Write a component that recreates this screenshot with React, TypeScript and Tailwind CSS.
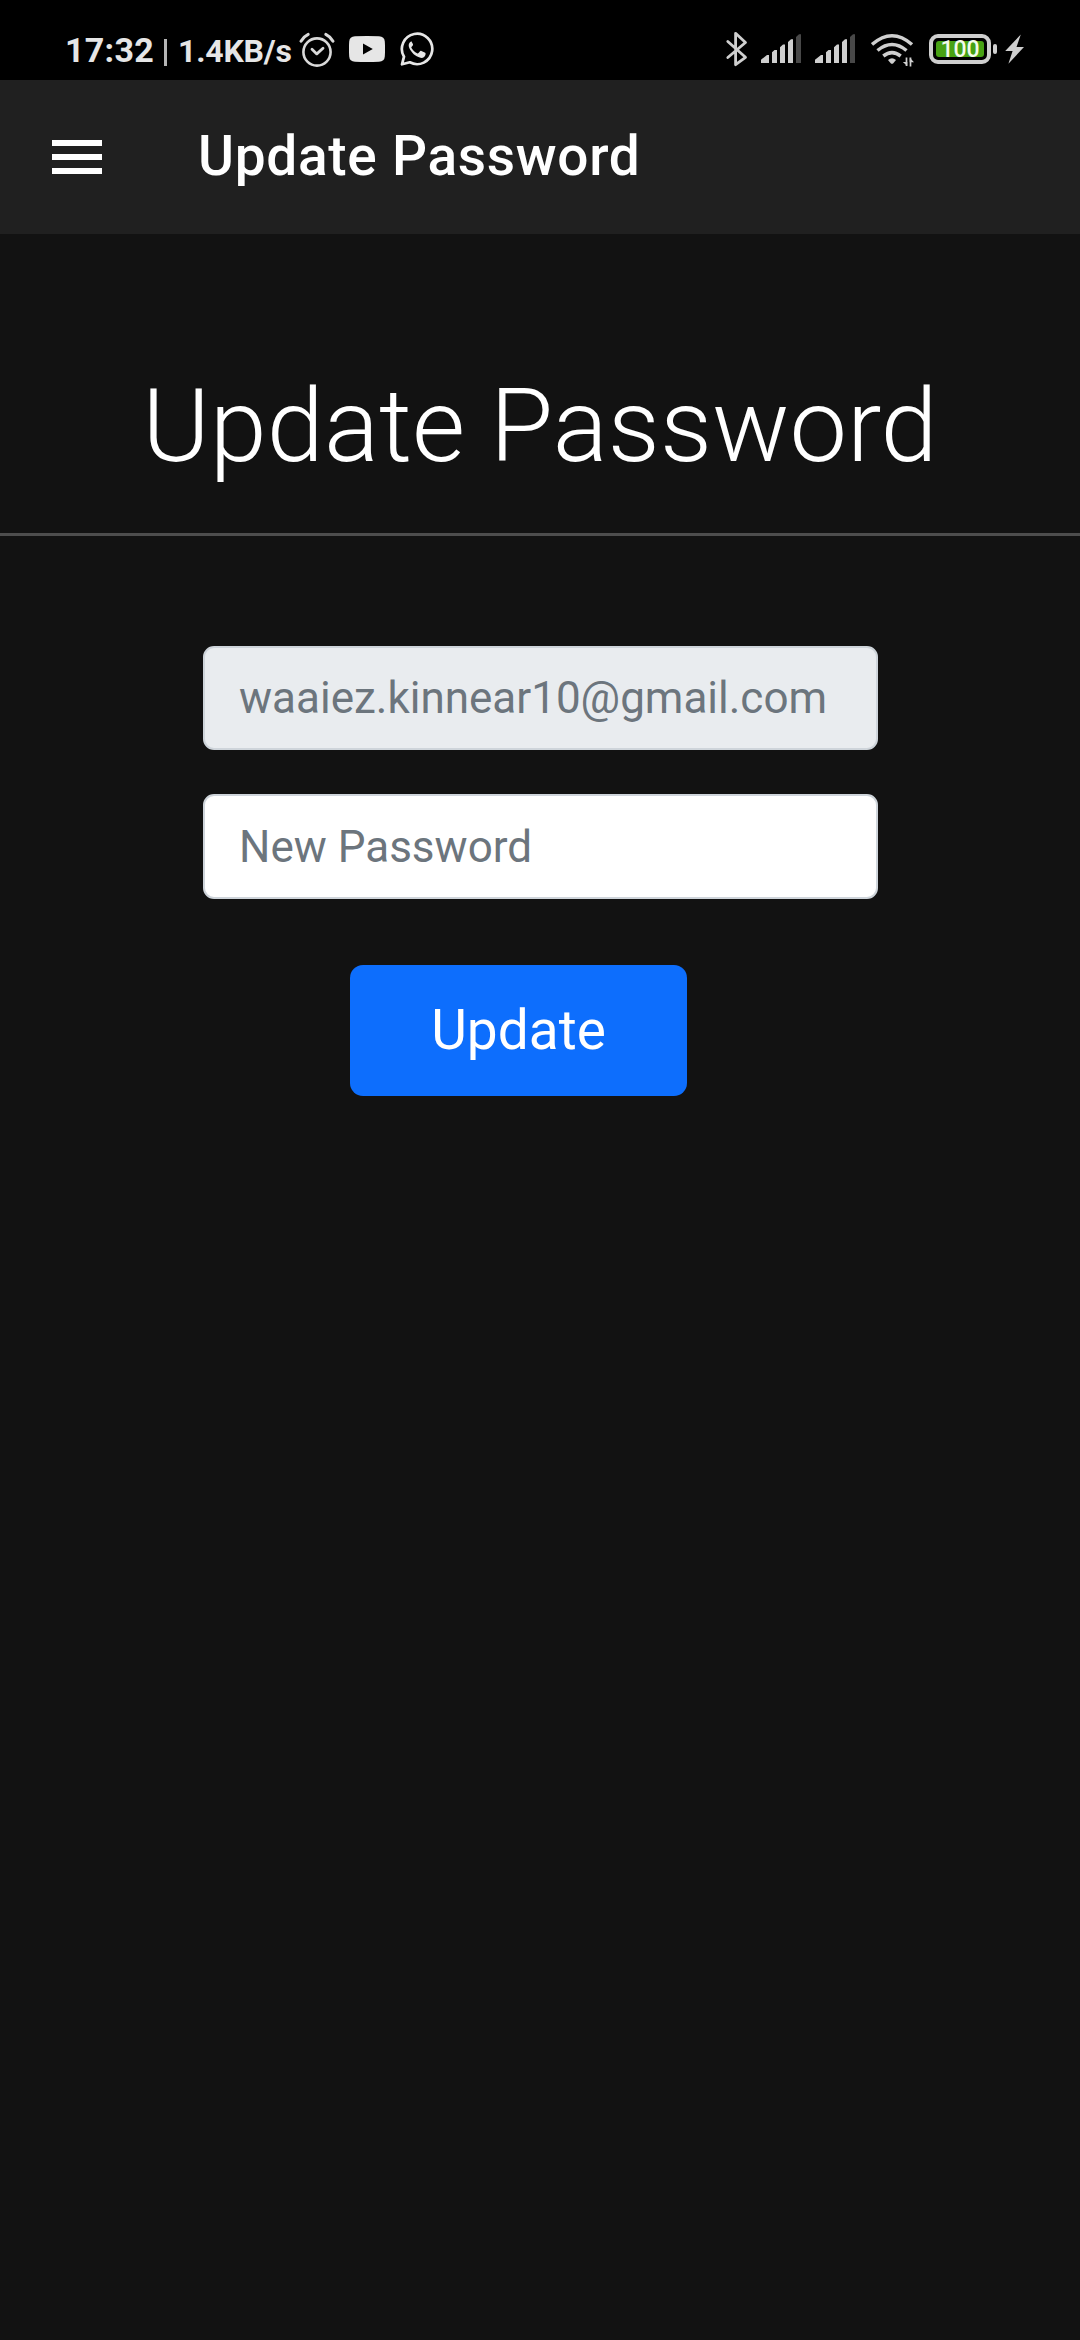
const Alarm = () => (
  <svg className="ml-[7px] h-10 w-[38px] shrink-0" viewBox="298 30 38 40" fill="none" stroke="#d9d9d9" strokeLinecap="round">
    <circle cx="317" cy="52" r="13.6" strokeWidth="2.6" />
    <path d="M312 49.3l4.8 4.6 6.2-5.6" strokeWidth="2.8" strokeLinejoin="round" />
    <path d="M301 41.2q2.6-4.6 7.2-6.8M333 41.2q-2.6-4.6-7.2-6.8" strokeWidth="3" />
  </svg>
);

const Video = () => (
  <svg className="ml-[13px] h-10 w-9 shrink-0" viewBox="349 30 36 40">
    <path d="M355 36.3q12-.8 24 0 5.500.3 5.800 5.200.5 7.500 0 15-.3 4.900-5.800 5.200-12 .6-24 0-5.500-.3-5.800-5.200-.5-7.500 0-15 .3-4.900 5.800-5.200z" fill="#e6e6e6" />
    <path d="M363 43.500v11l9.800-5.500z" fill="#000" />
  </svg>
);

const Chat = () => (
  <svg className="ml-[15px] h-10 w-[34px] shrink-0" viewBox="400 30 34 40">
    <path d="M402 64.300l2-7.600a15.200 15.200 0 1 1 5.800 5.600z" fill="none" stroke="#e6e6e6" strokeWidth="2.700" strokeLinejoin="round" />
    <path d="M411.300 41.200c-2.500 1.300-3.300 3.900-2 6.900 2.200 4.700 6 8.400 11 9.700 2.600.6 4.800-.8 5.300-3.600.1-1-.2-1.300-.9-1.700l-3.300-1.500c-.7-.3-1.100-.1-1.600.5l-1.300 1.600c-.4.500-.8.500-1.400.2-2.500-1.200-4.300-2.900-5.600-5.200-.3-.5-.2-.9.2-1.300l1.100-1.400c.3-.4.300-.8.100-1.300l-1.300-2.400c-.2-.5-.3-.6-.3-.5z" fill="#e6e6e6" />
  </svg>
);

const Bluetooth = () => (
  <svg className="h-10 w-6 shrink-0" viewBox="725 30 24 40" fill="none" stroke="#cfcfcf" strokeWidth="2.800" strokeLinejoin="round" strokeLinecap="round">
    <path d="M727.800 41.500L745.500 57.300l-9.900 7.400V33.300l9.900 9.200L727.800 57.500" />
  </svg>
);

const Signal = () => (
  <svg className="h-10 w-10 shrink-0" viewBox="761 30 40 40" fill="#cfcfcf">
    <path d="M761 63v-3.300l6-4.700h2v8zM772 63V52.300l2.500-2.300h2.500v13zM780 63V47.300l3-2.800h2V63zM788 63V42l3-2.700h2V63z" />
    <path d="M796 63V37l3-2.700h2V63z" fill="#484848" />
  </svg>
);

const Wifi = () => (
  <svg className="ml-4 h-10 w-11 shrink-0" viewBox="871 30 44 40" fill="none" stroke="#cfcfcf">
    <path d="M872 44.500q20-17.500 40 0M877.500 50.500q14.500-12 29 0M883.300 56q8.700-6.800 17.400 0" strokeWidth="3.500" />
    <path d="M888 60q4-3.300 8 0l-2.700 3.200q-1.300 1.300-2.600 0z" fill="#cfcfcf" stroke="none" />
    <path d="M906.500 57.500v8.500M910.500 57.500v9" strokeWidth="1.700" />
    <path d="M902.800 62h4.500v4zM909.700 57.500v4.800h4.300z" fill="#cfcfcf" stroke="none" />
  </svg>
);

const Bolt = () => (
  <svg className="ml-2 h-10 w-5 shrink-0" viewBox="1005 30 20 40" fill="#cfcfcf">
    <path d="M1020.800 34.500L1005.200 51h7.400l-4.200 12.700L1024 47h-7.500z" />
  </svg>
);

export default function App() {
  return (
    <div className="flex h-[2340px] w-[1080px] flex-col overflow-hidden bg-[#121212] font-['Roboto',sans-serif] text-white">
      <div className="flex h-20 shrink-0 items-start justify-between bg-black pt-[30px] pr-[55px] pl-[65px] text-[#e6e6e6]">
        <div className="flex items-start whitespace-nowrap">
          <span className="w-[98px] text-[34px] leading-10 font-bold tracking-[0.3px]">17:32</span>
          <span className="mt-[9px] mr-[11px] ml-[1px] h-[27px] w-[3px] bg-[#b5b5b5]" />
          <span className="w-[113px] pt-px text-[32px] leading-10 font-bold tracking-[-0.2px]">1.4KB/s</span>
          <Alarm />
          <Video />
          <Chat />
        </div>
        <div className="flex items-start">
          <Bluetooth />
          <div className="ml-3 flex gap-[14px]">
            <Signal />
            <Signal />
          </div>
          <Wifi />
          <div className="mt-1 ml-[14px] flex items-center">
            <div className="flex h-[30px] w-[62px] rounded-[9px] border-4 border-[#cfcfcf] p-[3px]">
              <div className="flex flex-1 items-center justify-center rounded-[3px] bg-[#47a113] text-[23px] leading-none font-medium text-[#f4fbea]">100</div>
            </div>
            <div className="ml-[2px] h-[10px] w-1 rounded-[2px] bg-[#cfcfcf]" />
          </div>
          <Bolt />
        </div>
      </div>

      <header className="flex h-[154px] shrink-0 items-center bg-[#202020] pl-[52px]">
        <button aria-label="Menu" className="flex w-[50px] flex-col gap-2">
          <span className="h-[6px] bg-white" />
          <span className="h-[6px] bg-white" />
          <span className="h-[6px] bg-white" />
        </button>
        <h1 className="ml-[96px] pb-[2px] text-[55px] leading-[64px] font-medium tracking-[0.7px] whitespace-nowrap">Update Password</h1>
      </header>

      <main className="flex flex-col">
        <div className="flex h-[302px] justify-center border-b-[3px] border-[#4d4d4d] pt-[131px]">
          <h2 className="text-[102.700px] leading-[122px] font-light whitespace-nowrap">Update Password</h2>
        </div>
        <form className="mt-[110px] ml-[203px] flex w-[675px] flex-col">
          <input
            disabled
            placeholder="waaiez.kinnear10@gmail.com"
            className="h-[104px] rounded-[11px] border-2 border-[#ced4da] bg-[#e9ecef] px-[34px] text-[44px] placeholder:text-[#6c757d]"
          />
          <input
            type="password"
            placeholder="New Password"
            className="mt-11 h-[105px] rounded-[11px] border-2 border-[#ced4da] bg-white px-[34px] text-[44px] placeholder:text-[#6c757d]"
          />
          <button type="button" className="mt-[66px] ml-[147px] h-[131px] w-[337px] rounded-[13px] bg-[#0d6efd] pb-[2px] text-[55px] leading-[64px]">
            Update
          </button>
        </form>
      </main>
    </div>
  );
}
